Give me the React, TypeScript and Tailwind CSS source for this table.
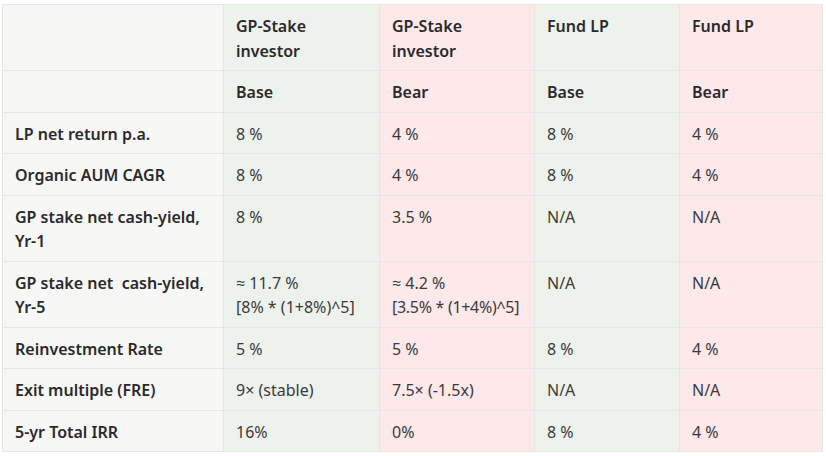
import React from "react";

const G = "bg-[#eef2ed]";
const P = "bg-[#fde8ea]";
const F = "bg-[#f7f7f6]";

type Row = { label: React.ReactNode; vals: React.ReactNode[] };

const rows: Row[] = [
  { label: "LP net return p.a.", vals: ["8 %", "4 %", "8 %", "4 %"] },
  { label: "Organic AUM CAGR", vals: ["8 %", "4 %", "8 %", "4 %"] },
  {
    label: (
      <>
        GP stake net cash-yield,
        <br />
        Yr-1
      </>
    ),
    vals: ["8 %", "3.5 %", "N/A", "N/A"],
  },
  {
    label: (
      <>
        GP stake net&nbsp; cash-yield,
        <br />
        Yr-5
      </>
    ),
    vals: [
      <>
        ≈ 11.7 %
        <br />
        [8% * (1+8%)^5]
      </>,
      <>
        ≈ 4.2 %
        <br />
        <span className="tracking-[-0.3px]">[3.5% * (1+4%)^5]</span>
      </>,
      "N/A",
      "N/A",
    ],
  },
  { label: "Reinvestment Rate", vals: ["5 %", "5 %", "8 %", "4 %"] },
  { label: "Exit multiple (FRE)", vals: ["9× (stable)", "7.5× (-1.5x)", "N/A", "N/A"] },
  { label: "5-yr Total IRR", vals: ["16%", "0%", "8 %", "4 %"] },
];

const bgs = [G, P, G, P];
const cell =
  "border border-[#e6e6e4] px-3 pt-[9px] pb-[7px] align-top text-left whitespace-nowrap overflow-visible";

export default function App() {
  return (
    <div
      className="bg-white w-[826px] h-[456px] pl-[2px] pt-[4px]"
      style={{ fontFamily: '"Noto Sans", "Open Sans", sans-serif' }}
    >
      <table className="table-fixed border-collapse w-[820px] text-[16px] leading-[24.5px] text-[#3a3a3a]">
        <colgroup>
          <col className="w-[221px]" />
          <col className="w-[156px]" />
          <col className="w-[155px]" />
          <col className="w-[145px]" />
          <col className="w-[143px]" />
        </colgroup>
        <thead>
          <tr>
            <th className={`${cell} ${F}`}></th>
            <th className={`${cell} ${G} font-semibold text-[#2a2a2a]`}>
              GP-Stake
              <br />
              investor
            </th>
            <th className={`${cell} ${P} font-semibold text-[#2a2a2a]`}>
              GP-Stake
              <br />
              investor
            </th>
            <th className={`${cell} ${G} font-semibold text-[#2a2a2a]`}>Fund LP</th>
            <th className={`${cell} ${P} font-semibold text-[#2a2a2a]`}>Fund LP</th>
          </tr>
          <tr>
            <th className={`${cell} ${F}`}></th>
            <th className={`${cell} ${G} font-semibold text-[#2a2a2a]`}>Base</th>
            <th className={`${cell} ${P} font-semibold text-[#2a2a2a]`}>Bear</th>
            <th className={`${cell} ${G} font-semibold text-[#2a2a2a]`}>Base</th>
            <th className={`${cell} ${P} font-semibold text-[#2a2a2a]`}>Bear</th>
          </tr>
        </thead>
        <tbody>
          {rows.map((r, i) => (
            <tr key={i}>
              <td className={`${cell} ${F} font-semibold text-[#2a2a2a]`}>{r.label}</td>
              {r.vals.map((v, j) => (
                <td key={j} className={`${cell} ${bgs[j]}`}>
                  {v}
                </td>
              ))}
            </tr>
          ))}
        </tbody>
      </table>
    </div>
  );
}
